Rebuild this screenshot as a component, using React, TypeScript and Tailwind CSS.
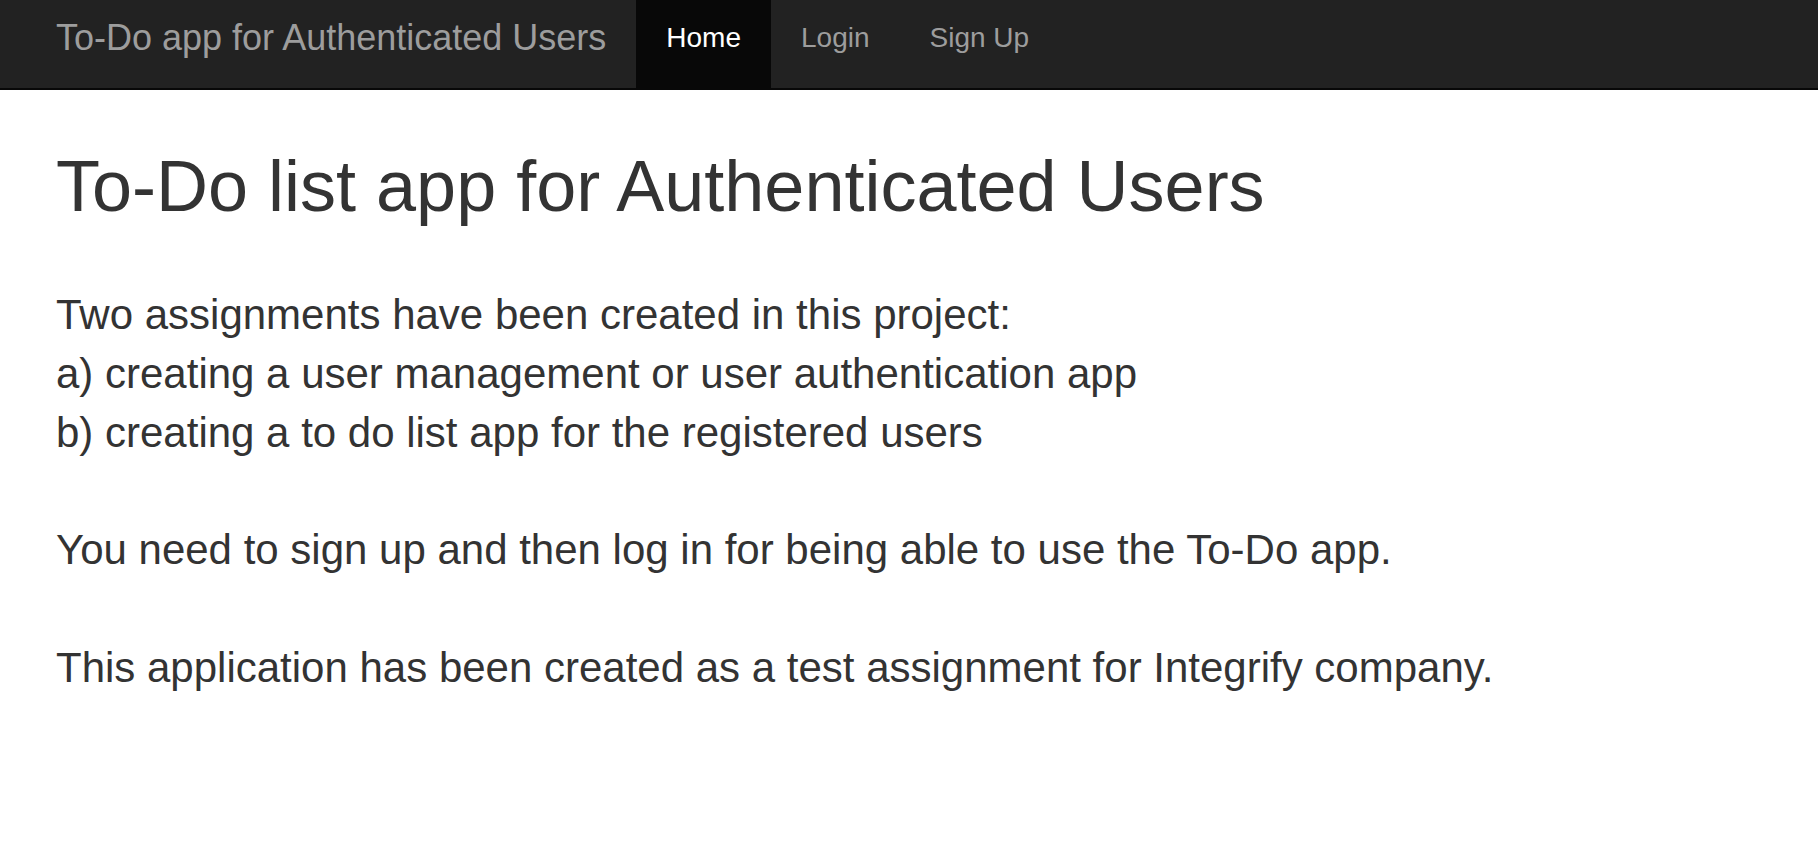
import React from "react";

const navLinks = [
  { label: "Home", active: true },
  { label: "Login", active: false },
  { label: "Sign Up", active: false },
];

export default function App() {
  return (
    <div className="min-h-screen bg-white font-['Liberation_Sans',Arial,sans-serif] text-[#333]">
      {/* Navbar */}
      <nav className="flex h-[90px] items-start border-b-2 border-[#080808] bg-[#222]">
        <a className="block h-[88px] pl-[56px] pr-[30px] pt-[18px] text-[36px] leading-[40px] text-[#9d9d9d]">
          To-Do app for Authenticated Users
        </a>
        <ul className="flex">
          {navLinks.map((link) => (
            <li key={link.label}>
              <a
                className={
                  link.active
                    ? "block h-[88px] bg-[#080808] px-[30px] pt-[18px] text-[28px] leading-[40px] text-white"
                    : "block h-[88px] px-[30px] pt-[18px] text-[28px] leading-[40px] text-[#9d9d9d]"
                }
              >
                {link.label}
              </a>
            </li>
          ))}
        </ul>
      </nav>

      {/* Content */}
      <main className="pl-[56px]">
        <h1 className="mt-[57px] text-[72px] leading-[79.2px] font-normal">
          To-Do list app for Authenticated Users
        </h1>
        <p className="mt-[60px] text-[42px] leading-[58.8px]">
          Two assignments have been created in this project:
          <br />
          a) creating a user management or user authentication app
          <br />
          b) creating a to do list app for the registered users
          <br />
          <br />
          You need to sign up and then log in for being able to use the To-Do app.
          <br />
          <br />
          This application has been created as a test assignment for Integrify company.
        </p>
      </main>
    </div>
  );
}
